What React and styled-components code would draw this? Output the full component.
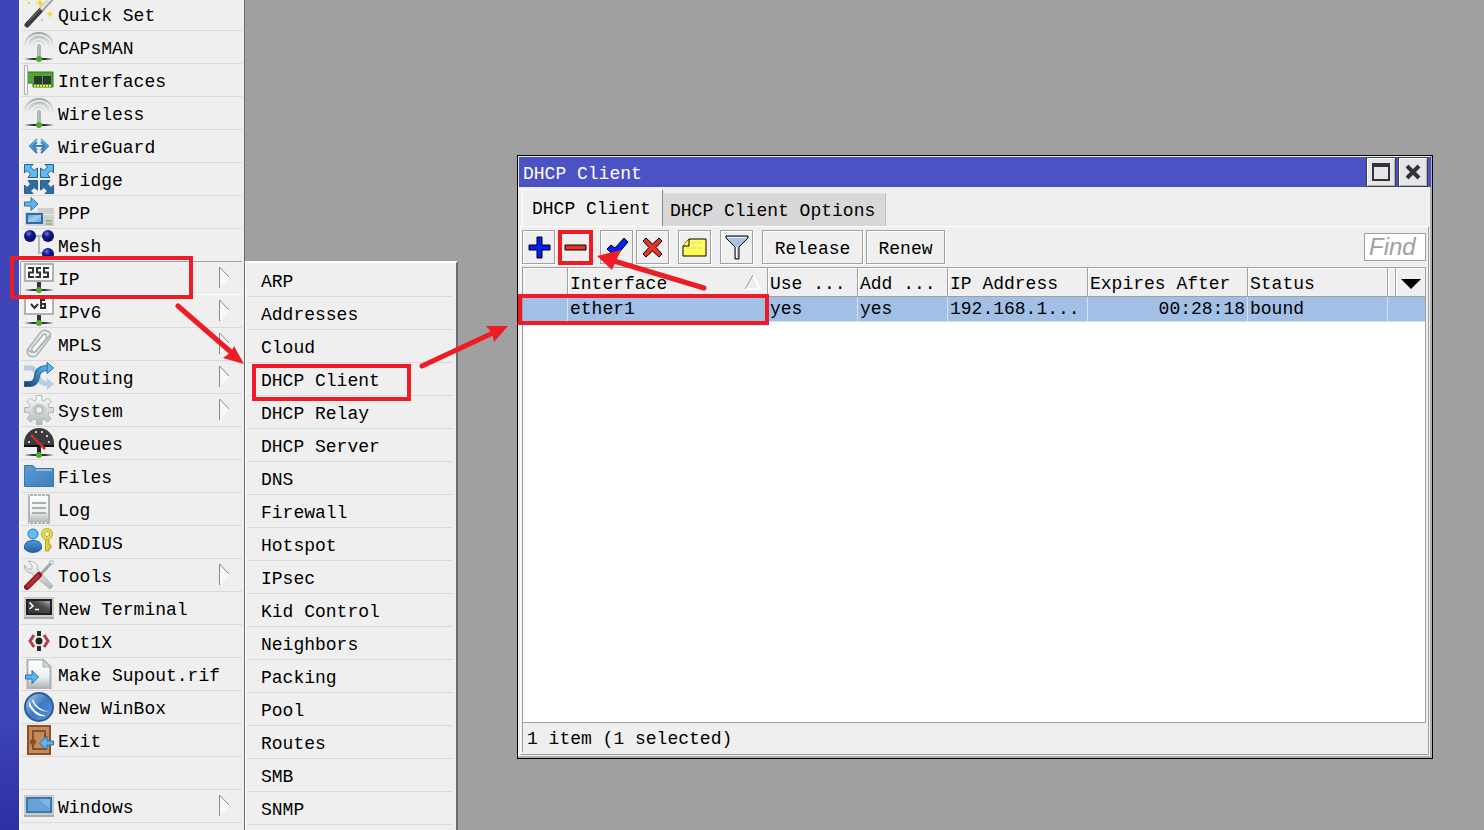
import React from "react";
import styled, { createGlobalStyle, css } from "styled-components";

const RED = "#ee1c24";
const FACE = "#efefef";
const LINE = "#a0a0a0";

const GlobalStyle = createGlobalStyle`
  * { box-sizing: border-box; }
  body { margin: 0; }
  body, button, table {
    font-family: "Liberation Mono", "Noto Sans CJK SC", monospace;
    font-size: 18px;
    color: #000;
  }
  button { margin: 0; padding: 0; border: 0; background: none; text-align: left; }
`;

const Page = styled.div`
  position: relative;
  display: flex;
  height: 100vh;
  overflow: hidden;
  background: #a0a0a0;
`;

const Strip = styled.div`
  flex: 0 0 19px;
  background: linear-gradient(#3e45b9, #3e45b9 86%, #2b30a4);
`;

const Nav = styled.nav`
  position: relative;
  flex: 0 0 226px;
  border-left: 2px solid #f6f6f6;
  border-right: 1px solid #6c6c6c;
  background: ${FACE};
`;

const List = styled.ul`
  list-style: none;
  margin: 0;
  padding: 0;
`;

const MainList = styled(List)`
  margin-top: -2px;
`;

const MenuRow = styled.li`
  height: 33px;
  margin-right: 2px;
  border-bottom: 1px solid ${(p) => (p.$open ? "#fff" : "#dadada")};
  ${(p) => p.$open && css`box-shadow: 0 -1px 0 ${LINE}, -1px 0 0 ${LINE};`}
`;

const MenuButton = styled.button`
  display: flex;
  align-items: center;
  gap: 4px;
  width: 100%;
  height: 32px;
  padding: 0 12px 0 3px;
  line-height: 32px;
  white-space: nowrap;
`;

const MenuText = styled.span`
  flex: 1;
  padding-top: 3px;
`;

const Icon = styled.svg`
  flex: none;
  width: 30px;
  height: 30px;
  overflow: hidden;
`;

const MoreMark = styled.svg`
  flex: none;
  width: 12px;
  height: 24px;
`;

const SubMenu = styled(List)`
  position: absolute;
  z-index: 2;
  left: 224px;
  top: 261px;
  bottom: 0;
  width: 213px;
  padding: 1px 3px 0 2px;
  overflow: hidden;
  background: ${FACE};
  border: solid;
  border-width: 2px 2px 0 1px;
  border-color: #fff #6c6c6c #fff #fff;
`;

const SubRow = styled.li`
  height: 33px;
  border-bottom: 1px solid #dadada;
`;

const SubButton = styled.button`
  width: 100%;
  height: 32px;
  padding: 3px 13px 0;
  line-height: 28px;
`;

const Desktop = styled.main`
  position: relative;
  flex: 1;
`;

const Window = styled.section`
  position: absolute;
  left: 272px;
  right: 51px;
  top: 155px;
  bottom: 71px;
  display: flex;
  flex-direction: column;
  padding: 1px;
  border: 1px solid #000;
  background: ${FACE};
  box-shadow: inset -2px -2px 0 #b0b0b0;
`;

const TitleBar = styled.header`
  display: flex;
  align-items: center;
  gap: 2px;
  height: 30px;
  padding: 0 3px 0 4px;
  background: #4a52c6;
`;

const Title = styled.h1`
  flex: 1;
  margin: 0;
  padding-top: 4px;
  font-size: 18px;
  font-weight: 400;
  line-height: 26px;
  color: #fff;
`;

const TitleButton = styled.button`
  display: grid;
  place-items: center;
  width: 30px;
  height: 30px;
  border: 1px solid #404040;
  background: #e6e6ea;
  box-shadow: inset 1px 1px 0 #fff, inset -1px -1px 0 #b0b0b8;
`;

const Tabs = styled.div`
  display: flex;
  align-items: flex-end;
  height: 39px;
  padding-left: 3px;
`;

const Tab = styled.button`
  height: ${(p) => (p.$active ? 37 : 33)}px;
  padding: ${(p) => (p.$active ? "2px 10px 0 9px" : "1px 8px 0 6px")};
  min-width: ${(p) => (p.$active ? 141 : 223)}px;
  background: ${(p) => (p.$active ? FACE : "#d8d8d8")};
  border: solid;
  border-width: 1px 1px 0;
  border-color: ${(p) => (p.$active ? "#fff #8a8a8a #fff #fff" : "#dedede #bdbdbd #d8d8d8 #d8d8d8")};
`;

const Panel = styled.div`
  flex: 1;
  display: flex;
  flex-direction: column;
  min-height: 0;
  margin: 0 2px 2px 1px;
  padding: 3px 2px 2px 1px;
  border: 1px solid ${LINE};
  border-top-color: #fff;
  border-left-color: #fff;
`;

const Toolbar = styled.div`
  display: flex;
  align-items: flex-start;
  gap: 9px;
  height: 37px;
`;

const Group = styled.div`
  display: flex;
  gap: 3px;
`;

const ToolButton = styled.button`
  display: grid;
  place-items: center;
  width: ${(p) => p.$width || 33}px;
  height: 34px;
  padding-top: ${(p) => (p.$width ? 3 : 0)}px;
  border: 1px solid ${LINE};
  box-shadow: inset 1px 1px 0 #fff, 1px 1px 0 #fff;
`;

const ToolIcon = styled.svg`
  width: 25px;
  height: 25px;
`;

const Find = styled.input`
  width: 62px;
  height: 28px;
  margin: 3px 0 0 auto;
  padding: 0 4px;
  border: 1px solid ${LINE};
  border-radius: 0;
  background: #fff;
  font: italic 24px/26px "Liberation Sans", sans-serif;
  &::placeholder { color: ${LINE}; opacity: 1; }
`;

const Grid = styled.div`
  flex: 1;
  border: 1px solid ${LINE};
  background: #fff;
`;

const Table = styled.table`
  width: 100%;
  table-layout: fixed;
  border-collapse: separate;
  border-spacing: 0;
`;

const HeadCell = styled.th`
  height: 29px;
  padding: 3px 0 0 2px;
  border-left: 1px solid ${(p) => (p.$first ? FACE : LINE)};
  border-bottom: 1px solid ${LINE};
  background: ${FACE};
  box-shadow: inset 1px 1px 0 #fff;
  font-weight: 400;
  text-align: left;
  white-space: nowrap;
`;

const HeadInner = styled.div`
  display: flex;
  align-items: center;
  justify-content: ${(p) => (p.$center ? "center" : "space-between")};
  padding-right: ${(p) => (p.$center ? 2 : 6)}px;
`;

const SortMark = styled.svg`
  width: 17px;
  height: 16px;
  margin-bottom: 3px;
`;

const Cell = styled.td`
  height: 25px;
  padding: 0 2px;
  border-left: 1px solid ${(p) => (p.$first ? "#a2bfe6" : "#d5e2f4")};
  border-bottom: 1px solid #d5e2f4;
  background: #a2bfe6;
  text-align: ${(p) => (p.$right ? "right" : "left")};
  white-space: nowrap;
`;

const Status = styled.footer`
  height: 29px;
  padding: 3px 4px 0;
  border-left: 1px solid ${LINE};
  line-height: 26px;
`;

const Notes = styled.svg`
  position: absolute;
  z-index: 3;
  left: 0;
  top: 0;
  width: 100%;
  height: 100%;
  pointer-events: none;
`;

/* Antenna foot and network line shared by several icons */
const Node = () => (
  <>
    <path d="M1 26H29V28H1Z" fill="url(#wire)" />
    <circle cx="15" cy="27" r="3" fill="#4fa832" />
  </>
);

const Antenna = () => (
  <>
    <path d="M1 14A14 13 0 0 1 29 14" fill="none" stroke="url(#wave)" strokeWidth="2" />
    <path d="M5 14A10 9 0 0 1 25 14" fill="none" stroke="url(#wave)" strokeWidth="3" />
    <path d="M9 14A6 5 0 0 1 21 14" fill="none" stroke="url(#wave)" strokeWidth="2" />
    <rect x="13" y="12" width="4" height="14" rx="2" fill="#afb9b7" />
    <Node />
  </>
);

const Board = ({ children }) => (
  <>
    <rect x="13" y="18" width="4" height="8" fill="#333" />
    <rect x="1" y="1" width="28" height="17" fill="#fafafa" stroke="#aab5b3" strokeWidth="2" />
    {children}
    <Node />
  </>
);

const BridgeArrow = ({ turn, lower }) => (
  <path
    d="M0.500 0.500H9L6.500 3L10 6.500L13.500 4V13.500H4L6.500 10L3 6.500L0.500 9Z"
    fill={lower ? "#2f6ca3" : "#5cbcf5"}
    stroke="#2c5f8f"
    transform={`rotate(${turn} 15 15)`}
  />
);

const icons = {
  wand: (
    <>
      <path d="M3 26L17 11" stroke="#3a3a3a" strokeWidth="5" strokeLinecap="round" />
      <path d="M17 11L28 -1" stroke="#999" strokeWidth="5" />
      <path d="M17 10L27 -1" stroke="#e2e2e2" strokeWidth="3" />
      <path d="M5 22L16 11" stroke="#777" strokeWidth="1" />
      <path d="M16 0L17.500 3L21 4L17.500 5L16 9L14.500 5L11 4L14.500 3ZM26 11L27 14L30 15L27 16L26 19L25 16L22 15L25 14Z" fill="#e8dc3a" />
      <path d="M4 3H6V5H4ZM17 20H19V22H17Z" fill="#ddd650" />
    </>
  ),
  antenna: <Antenna />,
  card: (
    <>
      <path d="M3 7H29V22H9V18H3Z" fill="#4ea52f" stroke="#2f7d1c" />
      <path d="M0.500 0.500H3.500V29.500H0.500Z" fill="#f6f7f7" stroke="#a9b4b2" />
      <path d="M10 11H18V19H10ZM19 11H27V19H19Z" fill="#333" />
      <path d="M10 21H28" stroke="#f0e04a" strokeWidth="2" strokeDasharray="2 1" />
    </>
  ),
  wireguard: (
    <>
      <path d="M13 8L6 15L13 22M17 8L24 15L17 22" fill="none" stroke="url(#blue)" strokeWidth="2" />
      <path d="M9 15H21M13 11L9 15L13 19M17 11L21 15L17 19" fill="none" stroke="#3a80c4" strokeWidth="2" />
    </>
  ),
  bridge: (
    <>
      <BridgeArrow turn={0} />
      <BridgeArrow turn={90} />
      <BridgeArrow turn={180} lower />
      <BridgeArrow turn={270} lower />
    </>
  ),
  ppp: (
    <>
      <path d="M14 11H30V29H14Z" fill="#cfcfcf" />
      <path d="M14 17H30V18H14Z" fill="#efefef" />
      <path d="M22 24H28M22 27H28" stroke="#56a53b" />
      <rect x="1" y="15" width="19" height="14" fill="#c9d4df" />
      <rect x="3" y="17" width="15" height="9" fill="url(#screen)" stroke="#2f6ba5" strokeWidth="2" />
      <path d="M0.500 5H7V0.500L14 7L7 13.500V9H0.500Z" fill="#5bb9f0" stroke="#336a9c" />
    </>
  ),
  mesh: (
    <>
      <path d="M6 6H24M15 6V23H24" fill="none" stroke="#b3bcba" strokeWidth="2" />
      <circle cx="6" cy="6" r="6" fill="url(#ball)" />
      <circle cx="24" cy="6" r="6" fill="url(#ball)" />
      <circle cx="24" cy="24" r="6" fill="url(#ball)" />
    </>
  ),
  ip: (
    <Board>
      <path d="M4 5H9V9.500H5V14H10M17 5H13V9.500H16V14H11.500M25 5H20V9.500H24V14H19" fill="none" stroke="#333" strokeWidth="2" />
    </Board>
  ),
  ipv6: (
    <Board>
      <path d="M7 8L10.500 12L14 8M21 4H17V12H21V8H17" fill="none" stroke="#333" strokeWidth="2" />
    </Board>
  ),
  mpls: (
    <g fill="none" stroke="#a9b3b1" strokeWidth="1.500">
      <path d="M4 20L16 4Q19 0 23 2Q28 3 26 9L13 26Q10 29 6 27Q2 25 4 20Z" fill="#e9eceb" />
      <path d="M8 19L19 6Q21 4 22 6Q23 8 22 10L12 22Q9 24 8 22Z" fill="#fff" />
      <path d="M4 19Q5 24 11 23L26 6" />
    </g>
  ),
  routing: (
    <>
      <path d="M0 6H7Q11 6 14 14Q16 22 24 22" fill="none" stroke="#b4cfe2" strokeWidth="5" />
      <path d="M23 16L30 22L23 28Z" fill="#b4cfe2" />
      <path d="M0 22H6Q12 22 13 14Q14 6 24 6" fill="none" stroke="#2c649b" strokeWidth="6" />
      <path d="M1 22H6Q12 22 13 14Q14 6 24 6" fill="none" stroke="url(#route)" strokeWidth="4" />
      <path d="M23 0.500L29.500 6L23 11.500Z" fill="#57bdf7" stroke="#2c649b" />
    </>
  ),
  gear: (
    <>
      <path
        d="M12.500 0.500H17.500L18 5L20 6L24 3L27 6.500L24 10L25 12.500H29.500V17.500H25L24 20L27 23.500L23.500 27L20 24L18 25V29.500H12.500V25L10 24L6.500 27L3 23.500L6 20L5 17.500H0.500V12.500H5L6 10L3 6.500L6.500 3L10 6L12 5Z"
        fill="url(#metal)"
        stroke="#adb7b5"
      />
      <circle cx="15" cy="15" r="6.500" fill="#c5cccb" />
      <circle cx="15" cy="15" r="3.500" fill="#efefef" stroke="#a4afad" />
    </>
  ),
  gauge: (
    <>
      <rect x="13" y="18" width="4" height="8" fill="#222" />
      <path d="M0 19V15A15 15 0 0 1 30 15V19Z" fill="#3b3b3b" />
      <path d="M0 17H30V19H0Z" fill="#111" />
      <path d="M4 13H6V15H4ZM11 3H13V5H11ZM17 3H19V5H17ZM22 7H24V9H22ZM24 13H26V15H24Z" fill="#ccc" />
      <path d="M7 7L21 21" stroke="#c2342f" strokeWidth="2.500" />
      <Node />
    </>
  ),
  folder: (
    <>
      <path d="M0.500 4.500H9L12 7.500H29.500V25.500H0.500Z" fill="url(#folder)" stroke="#3a78b0" />
      <path d="M12 9H28" stroke="#dceaf6" />
    </>
  ),
  log: (
    <>
      <path d="M5 1H25V29H5Z" fill="url(#page)" stroke="#acb6b4" strokeWidth="2" />
      <path d="M5 1H25M5 29H25" stroke="#efefef" strokeWidth="2" strokeDasharray="1 3" />
      <path d="M8 9H22M8 14H22M8 19H22" stroke="#a8b3b0" strokeWidth="2" />
    </>
  ),
  radius: (
    <>
      <circle cx="9" cy="7" r="5" fill="#5dbdf5" stroke="#2f74ac" />
      <path d="M0.500 20Q0.500 13.500 9 13.500Q17.500 13.500 17.500 20V22Q14 25.500 9 25.500Q4 25.500 0.500 22Z" fill="url(#blue)" stroke="#265f99" />
      <path d="M21.500 12V24H25V21H27V18H25V12" fill="#e0cf3d" stroke="#b5a52a" />
      <circle cx="23" cy="7" r="4" fill="#efefef" stroke="#b5a52a" strokeWidth="4" />
      <circle cx="23" cy="7" r="4" fill="none" stroke="#e6dc45" strokeWidth="2.500" />
    </>
  ),
  tools: (
    <>
      <path d="M28 2L17 14" stroke="#9ea9a7" strokeWidth="3" />
      <path d="M26 1H29V4H26Z" fill="#fff" stroke="#a5b0ae" />
      <path d="M4 1L8 5V9H4L0.500 5Q0 12 7 13L26 29L29 26L14 10Q14 1 4 1Z" fill="url(#metal)" stroke="#aab4b2" />
      <path d="M3 27L15 15" stroke="#8d1820" strokeWidth="6" strokeLinecap="round" />
      <path d="M3 27L15 15" stroke="#bb2f37" strokeWidth="3" />
    </>
  ),
  terminal: (
    <>
      <rect y="4" width="30" height="22" fill="#cacaca" />
      <rect y="24" width="30" height="2" fill="#aaa" />
      <rect x="3" y="7" width="24" height="14" fill="url(#dark)" stroke="#202020" strokeWidth="2" />
      <path d="M5.500 9.500L9 13L5.500 16M11 16.500H15" fill="none" stroke="#fff" strokeWidth="1.500" />
    </>
  ),
  dot1x: (
    <>
      <path d="M10 9L6 15L10 21M20 9L24 15L20 21" fill="none" stroke="#ab4148" strokeWidth="3" />
      <path d="M13 5H17V10H13ZM13 20H17V25H13Z" fill="#2a2a2a" />
      <circle cx="15" cy="15" r="3.500" fill="#222" />
    </>
  ),
  supout: (
    <>
      <path d="M3.500 0.500H19L26.500 8V29.500H3.500Z" fill="url(#page)" stroke="#a9b3b1" strokeWidth="2" />
      <path d="M19 0.500V8H26.500Z" fill="#ccd3d1" stroke="#a9b3b1" />
      <path d="M1.500 16H8V11.500L14.500 18L8 24.500V20H1.500Z" fill="#58b8f1" stroke="#2f6c9e" />
    </>
  ),
  winbox: (
    <>
      <circle cx="15" cy="15" r="14" fill="url(#orb)" stroke="#2e5c96" strokeWidth="2" />
      <path d="M5 9Q9 21 22 24Q12 26 5 14ZM9 7Q12 17 25 20Q13 20 8 9Z" fill="#fff" />
    </>
  ),
  exit: (
    <>
      <rect x="4" y="1" width="22" height="28" fill="#c58a5e" stroke="#8a4f27" strokeWidth="2" />
      <path d="M9 14V6H21V24H9V20" fill="none" stroke="#8a4f27" strokeWidth="2" />
      <circle cx="9" cy="17" r="3" fill="#8a4f27" />
      <path d="M29.500 16H23V11L15.500 18L23 25V20H29.500Z" fill="#58b8f1" stroke="#2f6c9e" />
    </>
  ),
  windows: (
    <>
      <rect y="4" width="30" height="22" fill="#c9c9c9" />
      <rect y="24" width="30" height="2" fill="#aaa" />
      <rect x="3" y="7" width="24" height="14" fill="#68a2da" stroke="#3876ac" strokeWidth="2" />
      <path d="M14 8H26V17Z" fill="#86b5e2" />
    </>
  ),
};

const Defs = () => (
  <defs>
    <linearGradient id="wire" x1="0" x2="30" y1="0" y2="0" gradientUnits="userSpaceOnUse">
      <stop offset="0" stopColor="#333" stopOpacity="0" />
      <stop offset="0.300" stopColor="#333" />
      <stop offset="0.700" stopColor="#333" />
      <stop offset="1" stopColor="#333" stopOpacity="0" />
    </linearGradient>
    <linearGradient id="wave" x1="0" x2="0" y1="0" y2="14" gradientUnits="userSpaceOnUse">
      <stop offset="0" stopColor="#94a3a0" />
      <stop offset="1" stopColor="#c8d0ce" stopOpacity="0.200" />
    </linearGradient>
    <linearGradient id="blue" x1="0" x2="0" y1="6" y2="26" gradientUnits="userSpaceOnUse">
      <stop offset="0" stopColor="#60c2f8" />
      <stop offset="1" stopColor="#255a9c" />
    </linearGradient>
    <linearGradient id="route" x1="0" x2="24" y1="22" y2="6" gradientUnits="userSpaceOnUse">
      <stop offset="0" stopColor="#153c75" />
      <stop offset="1" stopColor="#57bdf7" />
    </linearGradient>
    <linearGradient id="metal" x1="0" x2="0" y1="0" y2="1">
      <stop offset="0" stopColor="#fff" />
      <stop offset="1" stopColor="#b0bab8" />
    </linearGradient>
    <linearGradient id="page" x1="0" x2="0" y1="0" y2="1">
      <stop offset="0" stopColor="#fff" />
      <stop offset="0.600" stopColor="#eef0f0" />
      <stop offset="1" stopColor="#a9b3b1" />
    </linearGradient>
    <linearGradient id="folder" x1="0" x2="1" y1="0" y2="1">
      <stop offset="0" stopColor="#5b9bd2" />
      <stop offset="1" stopColor="#4080b8" />
    </linearGradient>
    <linearGradient id="screen" x1="0" x2="1" y1="0" y2="1">
      <stop offset="0" stopColor="#5a9ad8" />
      <stop offset="0.500" stopColor="#a8cdec" />
      <stop offset="1" stopColor="#5a9ad8" />
    </linearGradient>
    <linearGradient id="dark" x1="0" x2="1" y1="1" y2="0">
      <stop offset="0" stopColor="#333" />
      <stop offset="0.600" stopColor="#4a4a4a" />
      <stop offset="1" stopColor="#bbb" />
    </linearGradient>
    <radialGradient id="ball" cx="0.400" cy="0.300" r="0.700">
      <stop offset="0" stopColor="#7279d8" />
      <stop offset="0.400" stopColor="#101a8c" />
      <stop offset="1" stopColor="#050b5e" />
    </radialGradient>
    <linearGradient id="orb" x1="0" x2="1" y1="0" y2="1">
      <stop offset="0" stopColor="#b4d1f2" />
      <stop offset="0.500" stopColor="#3d79c8" />
      <stop offset="1" stopColor="#5b93d8" />
    </linearGradient>
  </defs>
);

const menu = [
  ["Quick Set", "wand"],
  ["CAPsMAN", "antenna"],
  ["Interfaces", "card"],
  ["Wireless", "antenna"],
  ["WireGuard", "wireguard"],
  ["Bridge", "bridge"],
  ["PPP", "ppp"],
  ["Mesh", "mesh"],
  ["IP", "ip", true],
  ["IPv6", "ipv6", true],
  ["MPLS", "mpls", true],
  ["Routing", "routing", true],
  ["System", "gear", true],
  ["Queues", "gauge"],
  ["Files", "folder"],
  ["Log", "log"],
  ["RADIUS", "radius"],
  ["Tools", "tools", true],
  ["New Terminal", "terminal"],
  ["Dot1X", "dot1x"],
  ["Make Supout.rif", "supout"],
  ["New WinBox", "winbox"],
  ["Exit", "exit"],
  null,
  ["Windows", "windows", true],
];

const ipMenu = [
  "ARP", "Addresses", "Cloud", "DHCP Client", "DHCP Relay", "DHCP Server",
  "DNS", "Firewall", "Hotspot", "IPsec", "Kid Control", "Neighbors",
  "Packing", "Pool", "Routes", "SMB", "SNMP",
];

const MenuItem = ({ label, icon, more, open }) => (
  <MenuRow $open={open}>
    <MenuButton aria-expanded={more ? !!open : undefined}>
      <Icon viewBox="0 0 30 30" aria-hidden="true">{icons[icon]}</Icon>
      <MenuText>{label}</MenuText>
      {more && (
        <MoreMark viewBox="0 0 12 24" aria-hidden="true">
          <path d="M1 1L11 11L1 22Z" fill="#f8f8f8" />
          <path d="M11 11L1 22" stroke="#fff" />
          <path d="M1.500 22V1L11 11" fill="none" stroke="#8a8a8a" />
        </MoreMark>
      )}
    </MenuButton>
  </MenuRow>
);

const Tool = ({ label, children }) => (
  <ToolButton aria-label={label}>
    <ToolIcon viewBox="0 0 25 25" aria-hidden="true">{children}</ToolIcon>
  </ToolButton>
);

export default function App() {
  return (
    <Page>
      <GlobalStyle />
      <Strip />
      <Nav>
        <MainList>
          {menu.map((m, i) =>
            m ? (
              <MenuItem key={m[0]} label={m[0]} icon={m[1]} more={m[2]} open={m[0] === "IP"} />
            ) : (
              <MenuRow key={i} />
            )
          )}
        </MainList>
        <SubMenu>
          {ipMenu.map((label) => (
            <SubRow key={label}>
              <SubButton>{label}</SubButton>
            </SubRow>
          ))}
        </SubMenu>
      </Nav>
      <Desktop>
        <Window aria-label="DHCP Client">
          <TitleBar>
            <Title>DHCP Client</Title>
            <TitleButton aria-label="Maximize">
              <svg width="18" height="18" viewBox="0 0 18 18">
                <path d="M1 2H17V17H1Z" fill="none" stroke="#333" strokeWidth="2" />
                <path d="M0 0H18V4H0Z" fill="#333" />
              </svg>
            </TitleButton>
            <TitleButton aria-label="Close">
              <svg width="16" height="16" viewBox="0 0 16 16">
                <path d="M2 2L14 14M14 2L2 14" stroke="#333" strokeWidth="4" />
              </svg>
            </TitleButton>
          </TitleBar>
          <Tabs role="tablist">
            <Tab role="tab" aria-selected="true" $active>DHCP Client</Tab>
            <Tab role="tab" aria-selected="false">DHCP Client Options</Tab>
          </Tabs>
          <Panel>
            <Toolbar>
              <Group>
                <Tool label="Add">
                  <path d="M11 2H16V10H24V15H16V23H11V15H3V10H11Z" fill="#0020f5" stroke="#000" />
                </Tool>
                <Tool label="Remove">
                  <path d="M3 10H24V15H3Z" fill="#ea3323" stroke="#000" />
                </Tool>
              </Group>
              <Group>
                <Tool label="Enable">
                  <path d="M3 14L7 10L11 13L20 3L24 7L13 20H9Z" fill="#0020f5" stroke="#000" />
                </Tool>
                <Tool label="Disable">
                  <path d="M3 6L6 3L12.500 9L19 3L22 6L16 12.500L22 19L19 22L12.500 16L6 22L3 19L9 12.500Z" fill="#ea3323" stroke="#000" />
                </Tool>
              </Group>
              <Tool label="Comment">
                <path d="M7 4H24V21H1V11Z" fill="#fffd54" stroke="#000" />
                <path d="M7 4V11H1" fill="#fffd54" stroke="#000" />
                <path d="M9 8H21M4 13H21" stroke="#ccc" strokeDasharray="4 2" />
              </Tool>
              <Tool label="Filter">
                <path d="M2 1H24V3L15 12V24H11V12L2 3Z" fill="#a9bfe4" stroke="#000" />
                <path d="M3 2H22V3H3Z" fill="#eef4fc" />
                <path d="M12 12H13V23H12Z" fill="#fff" />
              </Tool>
              <Group>
                <ToolButton $width={101}>Release</ToolButton>
                <ToolButton $width={79}>Renew</ToolButton>
              </Group>
              <Find type="text" placeholder="Find" aria-label="Find" />
            </Toolbar>
            <Grid>
              <Table>
                <colgroup>
                  <col width="44" />
                  <col width="200" />
                  <col width="90" />
                  <col width="90" />
                  <col width="140" />
                  <col width="160" />
                  <col />
                  <col width="8" />
                  <col width="30" />
                </colgroup>
                <thead>
                  <tr>
                    <HeadCell $first />
                    <HeadCell>
                      <HeadInner>
                        Interface
                        <SortMark viewBox="0 0 17 16" aria-hidden="true">
                          <path d="M9 1L16 15H1" fill="none" stroke="#fff" strokeWidth="2" />
                          <path d="M1 15L9 1" stroke="#999" />
                        </SortMark>
                      </HeadInner>
                    </HeadCell>
                    <HeadCell>Use ...</HeadCell>
                    <HeadCell>Add ...</HeadCell>
                    <HeadCell>IP Address</HeadCell>
                    <HeadCell>Expires After</HeadCell>
                    <HeadCell>Status</HeadCell>
                    <HeadCell />
                    <HeadCell>
                      <HeadInner $center>
                        <button aria-label="Columns">
                          <svg width="20" height="10" viewBox="0 0 20 10">
                            <path d="M0 0H20L10 10Z" />
                          </svg>
                        </button>
                      </HeadInner>
                    </HeadCell>
                  </tr>
                </thead>
                <tbody>
                  <tr>
                    <Cell $first />
                    <Cell>ether1</Cell>
                    <Cell>yes</Cell>
                    <Cell>yes</Cell>
                    <Cell>192.168.1...</Cell>
                    <Cell $right>00:28:18</Cell>
                    <Cell>bound</Cell>
                    <Cell colSpan={2} />
                  </tr>
                </tbody>
              </Table>
            </Grid>
            <Status>1 item (1 selected)</Status>
          </Panel>
        </Window>
      </Desktop>
      <Notes aria-hidden="true">
        <Defs />
        <g fill="none" stroke={RED} strokeWidth="4">
          <rect x="12" y="258" width="179" height="39" />
          <rect x="254" y="366" width="155" height="33" />
          <rect x="560" y="232" width="31" height="31" />
          <rect x="520" y="296" width="247" height="27" />
        </g>
        <g stroke={RED} strokeWidth="5" strokeLinecap="round">
          <path d="M178 306L232 353M422 366L495 332M704 288L614 261" />
        </g>
        <g fill={RED}>
          <path d="M244 364L234 346L231 352L223 358Z" />
          <path d="M508 326L486 326L492 333L494 342Z" />
          <path d="M597 256L621 250L616 261L612 270Z" />
        </g>
      </Notes>
    </Page>
  );
}
